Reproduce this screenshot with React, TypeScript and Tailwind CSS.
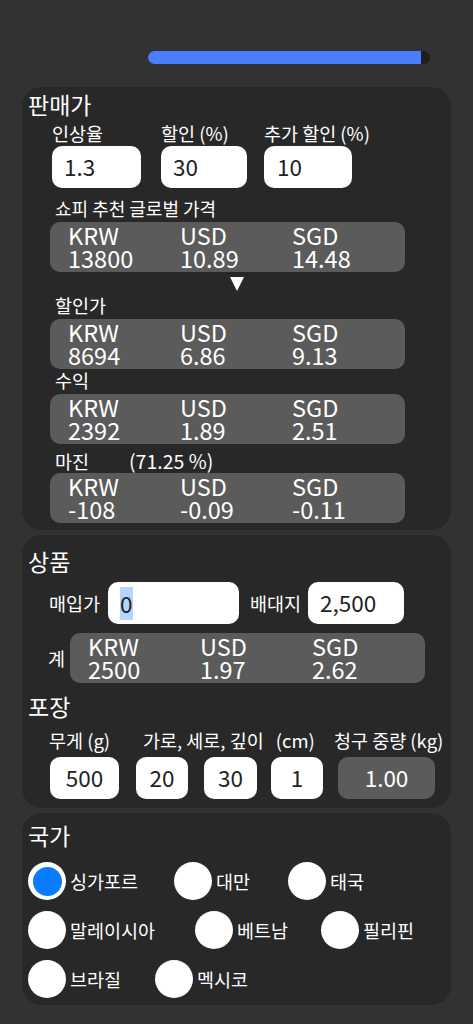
import React from "react";

const CURRENCIES = ["KRW", "USD", "SGD"];

function PriceBox({ values, className }: { values: string[]; className: string }) {
  return (
    <div className={`flex h-[50px] w-[355px] rounded-[10px] bg-[#5b5b5b] pl-[18px] pt-[2px] ${className}`}>
      {CURRENCIES.map((c, i) => (
        <div key={c} className="w-[112px] text-[23.5px] leading-[23px]">
          <div>{c}</div>
          <div>{values[i]}</div>
        </div>
      ))}
    </div>
  );
}

function Field({ value, className }: { value: React.ReactNode; className: string }) {
  return (
    <div className={`flex h-[42px] items-center rounded-[10px] bg-white text-[22.5px] text-[#222] ${className}`}>
      {value}
    </div>
  );
}

function Radio({ label, checked, className }: { label: string; checked?: boolean; className: string }) {
  return (
    <div className={`flex items-center ${className}`}>
      <div className="flex h-[38px] w-[38px] shrink-0 items-center justify-center rounded-full bg-white">
        {checked && <div className="h-[29px] w-[29px] rounded-full bg-[#0a7cff]" />}
      </div>
      <span className="ml-[4px] whitespace-nowrap text-[18.5px] leading-[20px]">{label}</span>
    </div>
  );
}

export default function App() {
  return (
    <div className="min-h-screen bg-[#323232] pt-[51px] font-['Noto_Sans_CJK_KR',sans-serif] text-white">
      {/* progress */}
      <div className="ml-[148px] h-[13px] w-[282px] rounded-full bg-[#1e1e1e]">
        <div className="h-full w-[273px] rounded-l-full bg-[#4a7efc]" />
      </div>

      {/* 판매가 */}
      <section className="mx-[22px] mt-[23px] rounded-[20px] bg-[#282828] pb-[7px] pt-[4px]">
        <h2 className="pl-[6px] text-[23px] leading-[26px]">판매가</h2>
        <div className="mt-[6px] flex pl-[30px]">
          <div className="w-[89px]">
            <div className="text-[18.5px] leading-[20px]">인상율</div>
            <Field value="1.3" className="mt-[3px] pl-[12px]" />
          </div>
          <div className="ml-[20px] w-[86px]">
            <div className="whitespace-nowrap text-[18.5px] leading-[20px]">할인 (%)</div>
            <Field value="30" className="mt-[3px] pl-[12px]" />
          </div>
          <div className="ml-[17px] w-[88px]">
            <div className="whitespace-nowrap text-[18.5px] leading-[20px]">추가 할인 (%)</div>
            <Field value="10" className="mt-[3px] pl-[13px]" />
          </div>
        </div>

        <div className="mt-[10px] pl-[33px] text-[18px] leading-[20px]">쇼피 추천 글로벌 가격</div>
        <PriceBox values={["13800", "10.89", "14.48"]} className="ml-[28px] mt-[4px]" />

        <div className="mt-[5px] flex justify-center">
          <svg width="14" height="14" viewBox="0 0 14 14">
            <path d="M0 0H14L7 14Z" fill="white" />
          </svg>
        </div>

        <div className="mt-[4px] pl-[33px] text-[18.5px] leading-[20px]">할인가</div>
        <PriceBox values={["8694", "6.86", "9.13"]} className="ml-[28px] mt-[4px]" />

        <div className="mt-[1px] pl-[33px] text-[18.5px] leading-[20px]">수익</div>
        <PriceBox values={["2392", "1.89", "2.51"]} className="ml-[28px] mt-[4px]" />

        <div className="mt-[7px] flex pl-[33px] text-[18.5px] leading-[20px]">
          <span className="w-[74px]">마진</span>
          <span className="text-[19.5px]">(71.25 %)</span>
        </div>
        <PriceBox values={["-108", "-0.09", "-0.11"]} className="ml-[28px] mt-[2px]" />
      </section>

      {/* 상품 / 포장 */}
      <section className="mx-[22px] mt-[5px] rounded-[20px] bg-[#282828] pb-[9px] pt-[13px]">
        <h2 className="pl-[6px] text-[23px] leading-[26px]">상품</h2>
        <div className="mt-[8px] flex items-center pl-[27px]">
          <span className="w-[59px] whitespace-nowrap text-[18.5px] leading-[20px]">매입가</span>
          <Field
            value={<span className="bg-[#b4d5fe] leading-[33px]">0</span>}
            className="w-[131px] pl-[12px]"
          />
          <span className="ml-[11px] w-[58px] whitespace-nowrap text-[18.5px] leading-[20px]">배대지</span>
          <Field value="2,500" className="w-[96px] pl-[12px]" />
        </div>
        <div className="mt-[9px] flex items-center pl-[26px]">
          <span className="w-[22px] text-[18.5px] leading-[20px]">계</span>
          <PriceBox values={["2500", "1.97", "2.62"]} className="" />
        </div>

        <h2 className="mt-[10px] pl-[6px] text-[23px] leading-[26px]">포장</h2>
        <div className="mt-[11px] flex whitespace-nowrap pl-[27px] text-[18.5px] leading-[20px]">
          <span className="w-[94px]">무게 (g)</span>
          <span className="w-[191px]">
            가로, 세로, 깊이<span className="ml-[12px]">(cm)</span>
          </span>
          <span>청구 중량 (kg)</span>
        </div>
        <div className="mt-[7px] flex pl-[28px]">
          <Field value="500" className="w-[69px] justify-center" />
          <Field value="20" className="ml-[17px] w-[52px] justify-center" />
          <Field value="30" className="ml-[16px] w-[53px] justify-center" />
          <Field value="1" className="ml-[14px] w-[52px] justify-center" />
          <div className="ml-[15px] flex h-[42px] w-[97px] items-center justify-center rounded-[10px] bg-[#5b5b5b] text-[22.5px]">
            1.00
          </div>
        </div>
      </section>

      {/* 국가 */}
      <section className="mx-[22px] mt-[5px] rounded-[20px] bg-[#282828] pb-[7px] pt-[9px]">
        <h2 className="pl-[6px] text-[23px] leading-[26px]">국가</h2>
        <div className="mt-[14px] flex pl-[6px]">
          <Radio label="싱가포르" checked className="w-[146px]" />
          <Radio label="대만" className="w-[114px]" />
          <Radio label="태국" className="" />
        </div>
        <div className="mt-[11px] flex pl-[6px]">
          <Radio label="말레이시아" className="w-[167px]" />
          <Radio label="베트남" className="w-[126px]" />
          <Radio label="필리핀" className="" />
        </div>
        <div className="mt-[11px] flex pl-[6px]">
          <Radio label="브라질" className="w-[127px]" />
          <Radio label="멕시코" className="" />
        </div>
      </section>
    </div>
  );
}
